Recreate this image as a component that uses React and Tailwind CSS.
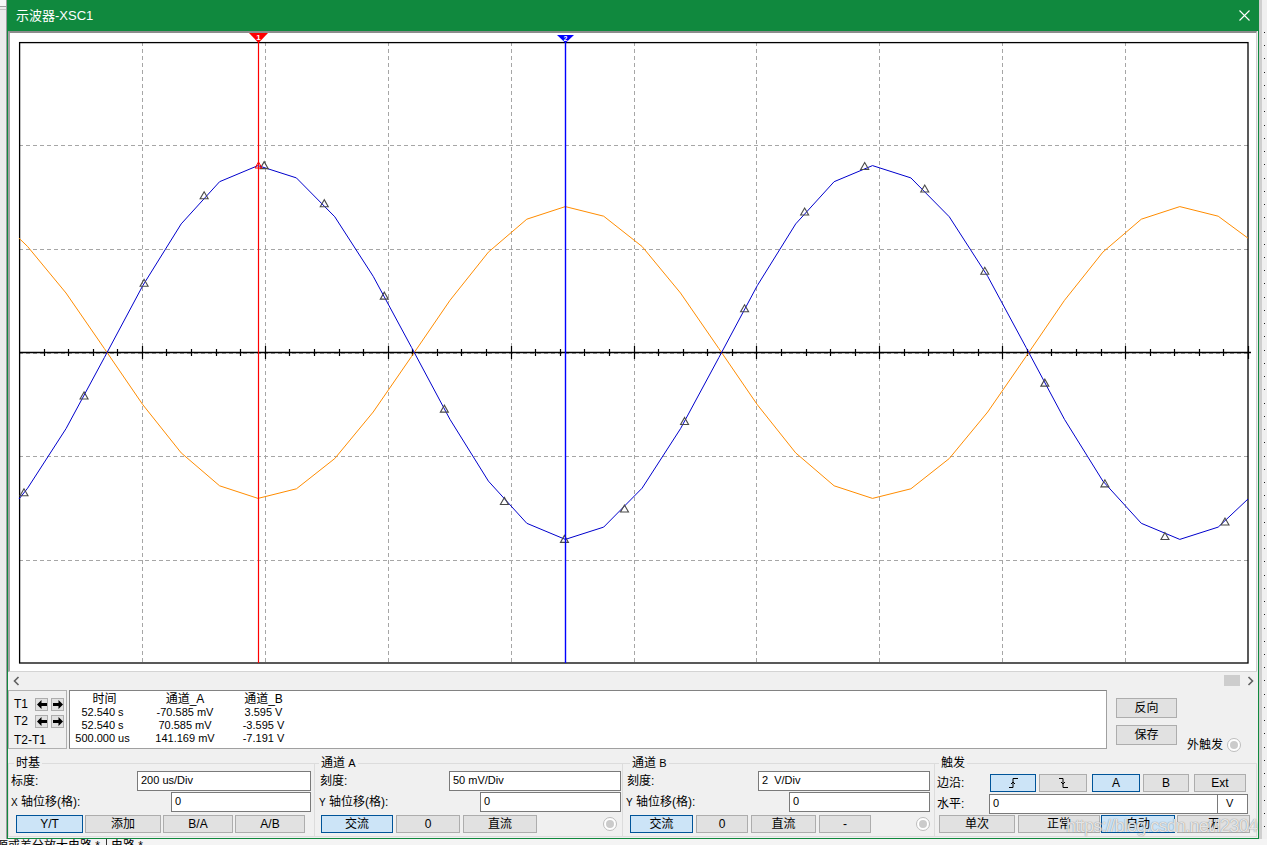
import React from 'react';

// scope geometry, in page pixels
const P = 614.5; // one period (1 kHz at 200 us/Div)
const X0 = 107; // rising zero crossing of channel B
const STEP = P / 16;
const L = 19, R = 1248, T = 42, B = 663, MID = 352.5;

const chB = x => MID - 187 * Math.sin((2 * Math.PI * (x - X0)) / P);
const chA = x => MID + 146 * Math.sin((2 * Math.PI * (x - X0)) / P);

const XS = (() => {
  const xs = [L];
  for (let x = 258 - STEP * 7; x < R; x += STEP) if (x > L) xs.push(x);
  xs.push(R);
  return xs;
})();
const pts = f => XS.map(x => `${x.toFixed(1)},${f(x).toFixed(1)}`).join(' ');

const MARKS = Array.from({ length: 21 }, (_, i) => 24 + i * 60.05);
const VGRID = Array.from({ length: 9 }, (_, i) => Math.round(L + (i + 1) * 122.9) + 0.5);
const HGRID = [145.5, 249.5, 353.5, 456.5, 560.5];
const TICKS = Array.from({ length: 50 }, (_, i) => i + 1);

function Scope() {
  return (
    <svg width="1246" height="638" className="block">
      <g transform="translate(-10,-33)">
        {VGRID.map(x => (
          <line key={x} x1={x} x2={x} y1={T} y2={B} stroke="#a6a6a6" strokeDasharray="4 3" />
        ))}
        {HGRID.map(y => (
          <line key={y} x1={L} x2={R} y1={y} y2={y} stroke="#a6a6a6" strokeDasharray="4 3" />
        ))}
        <rect x={19.6} y={42.6} width={R - L - 0.6} height={B - T - 0.6} fill="none" stroke="#000" strokeWidth="1.3" />
        <line x1={L} x2={1251} y1={MID} y2={MID} stroke="#000" strokeWidth="1.3" />
        {TICKS.map(k => {
          const x = Math.round(L + k * 24.58) + 0.5;
          const big = k % 5 === 0;
          return <line key={k} x1={x} x2={x} y1={big ? 346 : 349} y2={big ? 359 : 356} stroke="#000" strokeWidth="1.2" />;
        })}
        <polyline points={pts(chA)} fill="none" stroke="#ff8c00" strokeWidth="1" />
        <polyline points={pts(chB)} fill="none" stroke="#0000cd" strokeWidth="1" />
        {MARKS.map(x => {
          const y = chB(x);
          return (
            <path key={x} d={`M${x} ${y - 4} L${x - 4} ${y + 3} L${x + 4} ${y + 3} Z`} fill="none" stroke="#4a4a4a" strokeWidth="1.1" />
          );
        })}
        <line x1={258.5} x2={258.5} y1={36} y2={B} stroke="#ff0000" strokeWidth="1.2" />
        <line x1={565.5} x2={565.5} y1={38} y2={B} stroke="#0000ff" strokeWidth="1.4" />
        <path d="M258.5 162 L255 168 L262 168 Z" fill="none" stroke="#ff0000" strokeWidth="1" />
        <polygon points="249,33 268,33 258.5,43" fill="#ff0000" />
        <text x="258.5" y="40" fontSize="8" fontWeight="bold" fill="#fff" textAnchor="middle" fontFamily="Liberation Sans, sans-serif">1</text>
        <polygon points="557,35 574,35 565.5,43" fill="#0000ff" />
        <text x="565.5" y="41" fontSize="7" fontWeight="bold" fill="#fff" textAnchor="middle" fontFamily="Liberation Sans, sans-serif">2</text>
      </g>
    </svg>
  );
}

function Btn({ children, active, className = '' }) {
  return (
    <button
      className={`h-[18px] flex items-center justify-center border text-[12px] leading-none ${
        active ? 'bg-[#cce4f7] border-[#005499]' : 'bg-[#e1e1e1] border-[#adadad]'
      } ${className}`}
    >
      {children}
    </button>
  );
}

function Field({ value, className = '' }) {
  return (
    <div className={`h-[20px] bg-white border border-[#7a7a7a] flex items-center pl-[3px] text-[11px] ${className}`}>
      {value}
    </div>
  );
}

function Radio() {
  return (
    <div className="w-[14px] h-[14px] rounded-full border border-[#bdbdbd] bg-white flex items-center justify-center">
      <div className="w-[8px] h-[8px] rounded-full bg-[#cbcbcb]" />
    </div>
  );
}

function Group({ title, lg, className = '', children }) {
  return (
    <fieldset className={`h-[81px] border border-[#dcdcdc] ${className}`}>
      <legend className={`px-[2px] text-[12px] leading-[14px] ${lg}`}>{title}</legend>
      {children}
    </fieldset>
  );
}

function Arrow({ left }) {
  return (
    <div className="w-[13px] h-[13px] bg-[#e1e1e1] border border-[#adadad] flex items-center justify-center">
      <svg width="10" height="9" viewBox="0 0 10 9">
        <polygon
          points={left ? '0,4.5 4.5,0 4.5,3 10,3 10,6 4.5,6 4.5,9' : '10,4.5 5.5,0 5.5,3 0,3 0,6 5.5,6 5.5,9'}
          fill="#000"
        />
      </svg>
    </div>
  );
}

function Chevron({ right }) {
  return (
    <svg width="7" height="10" viewBox="0 0 7 10">
      <polyline points={right ? '1.5,1 5.5,5 1.5,9' : '5.5,1 1.5,5 5.5,9'} fill="none" stroke="#606060" strokeWidth="1.6" />
    </svg>
  );
}

function Edge({ falling }) {
  return (
    <svg width="11" height="12" viewBox="0 0 11 12">
      <path
        d={falling ? 'M1 1.5 H5 V10.5 H10 M3 5 L5 7 L7 5' : 'M1 10.5 H5 V1.5 H10 M3 7 L5 5 L7 7'}
        fill="none"
        stroke="#000"
        strokeWidth="1"
      />
    </svg>
  );
}

const READ = [
  ['52.540 s', '-70.585 mV', '3.595 V'],
  ['52.540 s', '70.585 mV', '-3.595 V'],
  ['500.000 us', '141.169 mV', '-7.191 V'],
];

function Readout() {
  return (
    <div className="h-[61px] flex items-start pt-[1px]">
      <div className="w-[59px] h-[59px] border border-[#b0b0b0] flex flex-col pt-[6px] pl-[5px] text-[12px]">
        <div className="h-[14px] flex items-center">
          <span className="w-[21px]">T1</span>
          <Arrow left />
          <div className="w-[3px]" />
          <Arrow />
        </div>
        <div className="h-[14px] mt-[3px] flex items-center">
          <span className="w-[21px]">T2</span>
          <Arrow left />
          <div className="w-[3px]" />
          <Arrow />
        </div>
        <div className="h-[14px] mt-[5px] leading-[14px]">T2-T1</div>
      </div>
      <div className="ml-[2px] w-[1038px] h-[59px] bg-white border border-[#a0a0a0] border-t-[#828282] border-l-[#828282] pt-[1px]">
        <div className="flex text-[12px] leading-[14px]">
          <div className="w-[65px] text-center pl-[4px]">时间</div>
          <div className="w-[100px] text-center">通道_A</div>
          <div className="w-[57px] text-center">通道_B</div>
        </div>
        {READ.map((r, i) => (
          <div key={i} className="flex text-[11px] leading-[13px]">
            <div className="w-[65px] text-center">{r[0]}</div>
            <div className="w-[100px] text-center">{r[1]}</div>
            <div className="w-[57px] text-center">{r[2]}</div>
          </div>
        ))}
      </div>
      <div className="flex-1 h-[60px] flex pl-[9px]">
        <div className="flex flex-col pt-[8px] gap-[7px]">
          <Btn className="w-[61px] h-[20px]">反向</Btn>
          <Btn className="w-[61px] h-[20px]">保存</Btn>
        </div>
        <div className="self-end mb-[-2px] ml-[10px] flex items-center h-[14px] text-[12px]">
          <span>外触发</span>
          <div className="ml-[4px]">
            <Radio />
          </div>
        </div>
      </div>
    </div>
  );
}

function Controls() {
  return (
    <div className="flex-1 flex pt-[6px]">
      <Group title="时基" lg="ml-[5px]" className="w-[307px]">
        <div className="h-[21px] flex items-center justify-between pl-[2px] pr-[3px] text-[12px]">
          <span>标度:</span>
          <Field value="200 us/Div" className="w-[174px]" />
        </div>
        <div className="h-[21px] flex items-center justify-between pl-[2px] pr-[3px] text-[12px]">
          <span>
            <span className="text-[10px]">X</span> 轴位移(格):
          </span>
          <Field value="0" className="w-[140px]" />
        </div>
        <div className="mt-[3px] flex gap-[2px] pl-[7px]">
          <Btn active className="w-[67px]">Y/T</Btn>
          <Btn className="w-[76px]">添加</Btn>
          <Btn className="w-[70px]">B/A</Btn>
          <Btn className="w-[70px]">A/B</Btn>
        </div>
      </Group>

      <Group title={<>通道 <span className="text-[11px]">A</span></>} lg="ml-[4px]" className="w-[308px] border-l-0">
        <div className="h-[21px] flex items-center justify-between pl-[5px] pr-[1px] text-[12px]">
          <span>刻度:</span>
          <Field value="50 mV/Div" className="w-[172px]" />
        </div>
        <div className="h-[21px] flex items-center justify-between pl-[4px] pr-[1px] text-[12px]">
          <span>
            <span className="text-[10px]">Y</span> 轴位移(格):
          </span>
          <Field value="0" className="w-[141px]" />
        </div>
        <div className="mt-[3px] flex items-center gap-[3px] pl-[6px] pr-[5px]">
          <Btn active className="w-[72px]">交流</Btn>
          <Btn className="w-[64px]">0</Btn>
          <Btn className="w-[74px]">直流</Btn>
          <div className="ml-auto">
            <Radio />
          </div>
        </div>
      </Group>

      <Group title={<>通道 <span className="text-[11px]">B</span></>} lg="ml-[7px]" className="w-[312px] border-l-0">
        <div className="h-[21px] flex items-center justify-between pl-[4px] pr-[4px] text-[12px]">
          <span>刻度:</span>
          <Field value="2  V/Div" className="w-[172px] whitespace-pre" />
        </div>
        <div className="h-[21px] flex items-center justify-between pl-[3px] pr-[4px] text-[12px]">
          <span>
            <span className="text-[10px]">Y</span> 轴位移(格):
          </span>
          <Field value="0" className="w-[141px]" />
        </div>
        <div className="mt-[3px] flex items-center gap-[3px] pl-[7px] pr-[4px]">
          <Btn active className="w-[63px]">交流</Btn>
          <Btn className="w-[52px]">0</Btn>
          <Btn className="w-[65px]">直流</Btn>
          <Btn className="w-[52px]">-</Btn>
          <div className="ml-auto">
            <Radio />
          </div>
        </div>
      </Group>

      <Group title="触发" lg="ml-[4px]" className="w-[322px] border-l-0">
        <div className="h-[22px] flex items-end pl-[2px] text-[12px]">
          <span className="w-[53px] leading-[18px]">边沿:</span>
          <Btn active className="w-[46px]"><Edge /></Btn>
          <Btn className="w-[48px] ml-[3px]"><Edge falling /></Btn>
          <Btn active className="w-[48px] ml-[5px]">A</Btn>
          <Btn className="w-[46px] ml-[3px]">B</Btn>
          <Btn className="w-[52px] ml-[5px]">Ext</Btn>
        </div>
        <div className="mt-[2px] h-[19px] flex items-center pl-[2px] text-[12px]">
          <span className="w-[52px]">水平:</span>
          <Field value="0" className="w-[229px] h-[19px]" />
          <Field value="V" className="w-[31px] h-[19px] -ml-px pl-[8px]" />
        </div>
        <div className="mt-[2px] flex pl-[4px]">
          <Btn className="w-[76px]">单次</Btn>
          <Btn className="w-[82px] ml-[3px]">正常</Btn>
          <Btn active className="w-[74px] ml-[1px]">自动</Btn>
          <Btn className="w-[73px] ml-[2px]">无</Btn>
        </div>
      </Group>
    </div>
  );
}

function Window() {
  return (
    <div className="relative w-[1252px] flex flex-col border-x border-b border-[#10893e] overflow-hidden">
      <div className="h-[31px] bg-[#10893e] flex items-center justify-between pl-[8px] pr-[8px] text-white text-[13px]">
        <span>示波器-XSC1</span>
        <svg width="11" height="11" viewBox="0 0 11 11">
          <path d="M0.5 0.5 L10.5 10.5 M10.5 0.5 L0.5 10.5" stroke="#fff" strokeWidth="1.1" />
        </svg>
      </div>
      <div className="h-[641px] mr-[1px] bg-white border-t-2 border-l-2 border-r border-b border-t-[#8c8c8c] border-l-[#a0a0a0] border-r-[#d0d0d0] border-b-[#d4d4d4]">
        <Scope />
      </div>
      <div className="h-[17px] flex items-center pl-[5px] pr-[4px]">
        <Chevron />
        <div className="ml-auto w-[16px] h-[11px] bg-[#cdcdcd]" />
        <div className="w-[7px]" />
        <Chevron right />
      </div>
      <Readout />
      <Controls />
      <div className="absolute left-[1058px] top-[813px] text-[18px] tracking-[-0.7px] whitespace-nowrap text-white/80 [text-shadow:0_0_1px_#666]">
        https://blog.csdn.net/l230401
      </div>
    </div>
  );
}

export default function App() {
  return (
    <div className="w-[1267px] h-[845px] overflow-hidden bg-[#f0f0f0] text-black [font-family:'Liberation_Sans','Noto_Sans_CJK_SC',sans-serif]">
      <div className="flex h-[839px]">
        <div className="w-[7px] flex flex-col bg-[#ebebeb] border-r border-[#9c9c9c]">
          <div className="h-[7px] border-b border-[#a0a0a0] bg-[#f7f7f7]" />
          <div className="h-[3px] border-b border-[#c4c4c4]" />
        </div>
        <Window />
        <div className="flex flex-1">
          <div className="w-[3px] bg-[#cfcfcf]" />
          <div className="flex-1 flex flex-col pt-[32px] pl-[2px]">
            {Array.from({ length: 61 }, (_, i) => (
              <div key={i} className="h-[13.33px]">
                <div className="w-[1px] h-[1px] bg-[#222]" />
              </div>
            ))}
          </div>
        </div>
      </div>
      <div className="h-[6px] flex bg-[#f4f4f4] overflow-hidden text-[12px] leading-[14px]">
        <div className="w-[110px] -ml-[4px] whitespace-nowrap">源或差分放大电路 *</div>
        <div className="w-[1px] bg-[#333]" />
        <div className="pl-[4px] whitespace-nowrap">电路 *</div>
      </div>
    </div>
  );
}
